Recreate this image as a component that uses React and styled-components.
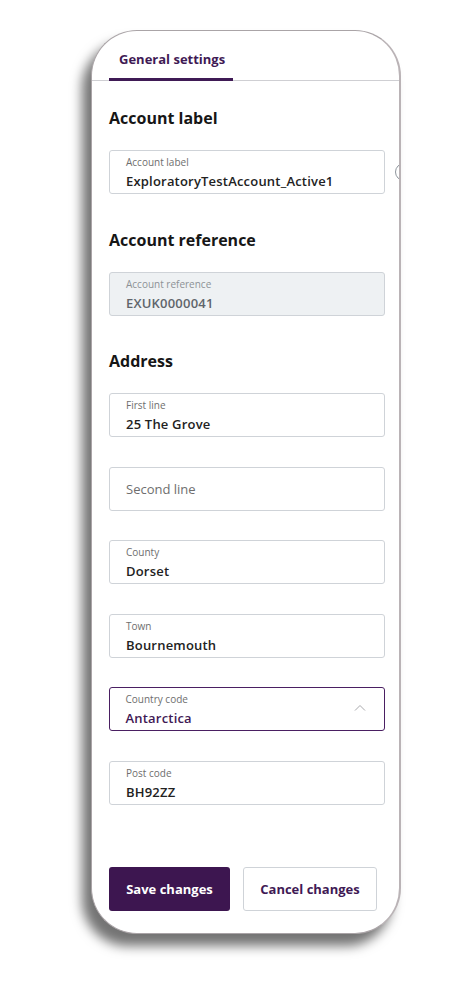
import React from 'react';
import styled, { createGlobalStyle } from 'styled-components';

const GlobalStyle = createGlobalStyle`
  body {
    margin: 0;
    background: #ffffff;
    font-family: "Open Sans", "Noto Sans", sans-serif;
  }
`;

const Page = styled.div`
  width: 474px;
  height: 998px;
  padding: 30px 0 0 91px;
  box-sizing: border-box;
  background: #fff;
`;

const Phone = styled.div`
  width: 310px;
  height: 904px;
  box-sizing: border-box;
  border: 1px solid #aaa4a7;
  border-right: 2px solid #bab3b6;
  border-radius: 46px;
  background: #fff;
  box-shadow: -9px 12px 12px rgba(0, 0, 0, 0.55);
  overflow: hidden;
  display: flex;
  flex-direction: column;
`;

const TabBar = styled.div`
  height: 49px;
  display: flex;
  align-items: flex-end;
  padding-left: 17px;
  border-bottom: 1px solid #cfcfd3;
  flex-shrink: 0;
`;

const Tab = styled.div`
  width: 124px;
  height: 46px;
  box-sizing: border-box;
  padding-left: 10px;
  padding-top: 15px;
  font-size: 13px;
  font-weight: 700;
  color: #3f1a55;
  border-bottom: 3px solid #3f1a55;
  margin-bottom: -1px;
`;

const Content = styled.div`
  padding: 0 14px 0 17px;
  display: flex;
  flex-direction: column;
  flex: 1;
`;

const Heading = styled.h2`
  margin: ${p => (p.$first ? '27px' : '35.5px')} 0 22px;
  font-size: 16px;
  line-height: 20px;
  font-weight: 700;
  color: #161616;
`;

const Field = styled.div`
  position: relative;
  height: 44px;
  flex-shrink: 0;
  box-sizing: border-box;
  border: ${p => (p.$focused ? '1.5px solid #4a1f62' : '1px solid #cfd3d8')};
  border-radius: 3px;
  background: ${p => (p.$disabled ? '#eef1f3' : '#fff')};
  padding: ${p => (p.$focused ? '4.5px 15.5px' : '5px 16px')};
  display: flex;
  flex-direction: column;
  justify-content: ${p => (p.$empty ? 'center' : 'flex-start')};
  margin-bottom: ${p => (p.$gap ? '29.6px' : '0')};
`;

const Label = styled.div`
  font-size: 10px;
  line-height: 13px;
  color: ${p => (p.$disabled ? '#8d9196' : '#6e6e6e')};
`;

const Value = styled.div`
  margin-top: 3px;
  font-size: 13px;
  line-height: 18px;
  font-weight: 600;
  letter-spacing: 0.2px;
  color: ${p => (p.$disabled ? '#60656b' : p.$accent ? '#3f1a55' : '#222')};
`;

const Placeholder = styled.div`
  font-size: 13px;
  line-height: 18px;
  color: #6e6e6e;
`;

const Chevron = styled.svg`
  position: absolute;
  right: 18px;
  top: 16px;
`;

const Knob = styled.div`
  position: absolute;
  right: -29px;
  top: 12px;
  width: 16px;
  height: 16px;
  border: 1px solid #8e959c;
  border-radius: 50%;
`;

const Actions = styled.div`
  display: flex;
  gap: 13px;
  margin-top: 62px;
`;

const Button = styled.button`
  height: 44px;
  width: ${p => (p.$primary ? '121px' : '134px')};
  box-sizing: border-box;
  border-radius: 3px;
  border: ${p => (p.$primary ? 'none' : '1px solid #cfd3d8')};
  background: ${p => (p.$primary ? '#3d1650' : '#fff')};
  color: ${p => (p.$primary ? '#fff' : '#3f1a55')};
  font-family: inherit;
  font-size: 13px;
  font-weight: 700;
  cursor: pointer;
`;

function InputField({ label, value, disabled, focused, accent, gap, children }) {
  return (
    <Field $disabled={disabled} $focused={focused} $gap={gap}>
      <Label $disabled={disabled}>{label}</Label>
      <Value $disabled={disabled} $accent={accent}>{value}</Value>
      {children}
    </Field>
  );
}

export default function App() {
  return (
    <>
      <GlobalStyle />
      <Page>
        <Phone>
          <TabBar>
            <Tab>General settings</Tab>
          </TabBar>
          <Content>
            <Heading $first>Account label</Heading>
            <InputField label="Account label" value="ExploratoryTestAccount_Active1">
              <Knob />
            </InputField>

            <Heading>Account reference</Heading>
            <InputField label="Account reference" value="EXUK0000041" disabled />

            <Heading>Address</Heading>
            <InputField label="First line" value="25 The Grove" gap />
            <Field $empty $gap>
              <Placeholder>Second line</Placeholder>
            </Field>
            <InputField label="County" value="Dorset" gap />
            <InputField label="Town" value="Bournemouth" gap />
            <InputField label="Country code" value="Antarctica" focused accent gap>
              <Chevron width="12" height="8" viewBox="0 0 12 8">
                <path d="M1 6.5 L6 1.5 L11 6.5" fill="none" stroke="#a9a9ad" strokeWidth="1" />
              </Chevron>
            </InputField>
            <InputField label="Post code" value="BH92ZZ" />

            <Actions>
              <Button $primary>Save changes</Button>
              <Button>Cancel changes</Button>
            </Actions>
          </Content>
        </Phone>
      </Page>
    </>
  );
}
